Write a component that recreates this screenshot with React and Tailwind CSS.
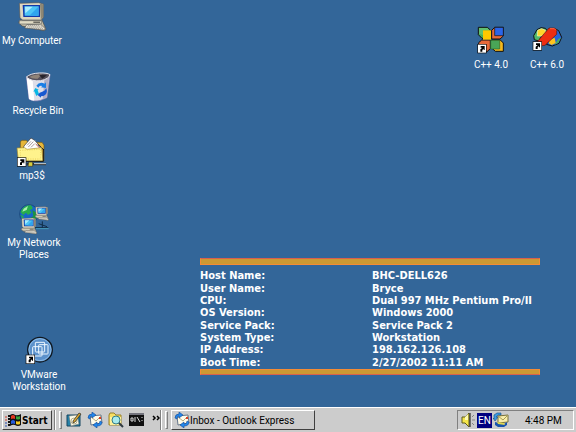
import React from "react";

const ShortcutArrow = ({ x, y }) => (
  <g transform={`translate(${x} ${y})`}>
    <rect width="28" height="28" fill="#111" />
    <rect x="2" y="2" width="24" height="24" fill="#fff" />
    <path d="M10 6H22V18H19V14L15 18V23H9V16L15 11H10Z" fill="#000" />
  </g>
);

const Monitor = ({ x, y, s }) => (
  <g transform={`translate(${x} ${y}) scale(${s})`}>
    <path d="M6 54L72 54L84 82L78 86L12 72L2 62Z" fill="#c4bda6" stroke="#4a4a4a" strokeWidth="2" />
    <path d="M4 56H70V66H4Z" fill="#e2dcc4" stroke="#666" strokeWidth="2" />
    <path d="M46 59H66V62H46Z" fill="#333" />
    <path d="M26 68L68 67L82 80L76 84L20 78Z" fill="#eee8d8" stroke="#555" strokeWidth="2" />
    <path d="M30 71H67M27 75H72M36 79H75" stroke="#777" strokeWidth="2" strokeDasharray="4 2" />
    <path d="M4 4L62 2L76 6V46L70 54H14L6 48Z" fill="#ddd6c0" stroke="#555" strokeWidth="2" />
    <path d="M66 5L76 7V46L68 53Z" fill="#8d8774" />
    <path d="M14 9H66V45H16Z" fill="#1238a8" />
    <path d="M19 13H62V41H20Z" fill="#4cc4f6" />
    <path d="M21 14H44L22 34Z" fill="#a9ecff" />
    <path d="M61 14V41H34Z" fill="#2fa4ee" />
  </g>
);

const ComputerIcon = () => (
  <svg width="30" height="30" viewBox="54 3 90 90" aria-hidden="true">
    <Monitor x={57} y={3} s={1} />
  </svg>
);

const RecycleIcon = () => (
  <svg width="26" height="30" viewBox="79 36 78 90" aria-hidden="true">
    <path d="M83 51L91 117Q104 126 126 121L145 113L154 45Z" fill="#dedee8" stroke="#8079b0" strokeWidth="2" />
    <path d="M84 54L91 117Q98 122 107 122L102 61Z" fill="#fff" />
    <path d="M137 60L152 47L144 112L132 118Z" fill="#b0aec5" />
    <path d="M83 51Q96 40 122 39Q146 38 154 44Q151 57 126 62Q98 65 83 51Z" fill="#55505c" stroke="#e4e4ec" strokeWidth="3" />
    <path d="M92 51Q107 42 130 43L117 56Q101 58 92 51Z" fill="#8f8378" />
    <path d="M121 44L145 46L131 56Z" fill="#27232b" />
    <path d="M113 77Q122 64 138 71L142 67V84L127 82L131 78Q122 75 119 83Z" fill="#197de6" />
    <path d="M110 84L120 89L117 91L121 102L113 108L107 94L104 95Z" fill="#08b7e5" />
    <path d="M124 98L137 92L143 85Q149 102 134 108L127 109V113L117 105L126 95Z" fill="#1758d0" />
  </svg>
);

const FolderIcon = () => (
  <svg width="32" height="32" viewBox="54 33 96 96" aria-hidden="true">
    <path d="M67 67V47L72 43H85L90 49H132L138 57V105H62V67Z" fill="#e6b63a" stroke="#6a551b" strokeWidth="2" />
    <path d="M78 60L99 36L110 43L132 67L126 78H72Z" fill="#fff" stroke="#333" strokeWidth="2" />
    <path d="M87 58L99 46M91 63L106 47M99 64L110 53" stroke="#a99" strokeWidth="3" />
    <path d="M113 54L127 68" stroke="#c05848" strokeWidth="3" />
    <path d="M119 55L138 72" stroke="#111" strokeWidth="3" />
    <path d="M57 66L80 65L87 70L131 65L135 105H61Z" fill="#fff38c" stroke="#a58a32" strokeWidth="2" />
    <path d="M66 73L128 70V99H68Z" fill="none" stroke="#e9d15e" strokeWidth="3" strokeDasharray="3 4" />
    <path d="M136 69V106H68" fill="none" stroke="#111" strokeWidth="3" />
    <path d="M86 114H144" stroke="#303030" strokeWidth="7" />
    <path d="M108 113H144" stroke="#ced8dd" strokeWidth="3" />
    <path d="M92 108H104V121H90Z" fill="#d7cd3c" stroke="#333" strokeWidth="2" />
    <ShortcutArrow x={57} y={94} />
  </svg>
);

const NetworkIcon = () => (
  <svg width="31" height="31" viewBox="56 24 93 93" aria-hidden="true">
    <circle cx="86" cy="54" r="28" fill="#1667c8" stroke="#173d68" strokeWidth="2" />
    <path d="M65 39Q76 25 92 28L98 37L89 43L94 50L83 57L77 50L69 57L60 49Z" fill="#27ad4b" />
    <path d="M96 42L111 52L109 67L98 76L90 67L99 60Z" fill="#1c9442" />
    <path d="M60 56L70 60L68 72Z" fill="#27ad4b" />
    <path d="M70 38L83 30L79 42L66 47Z" fill="#a9efaf" />
    <path d="M104 95H144M126 76V96M115 83L140 92" stroke="#102e48" strokeWidth="3" />
    <path d="M107 98H145" stroke="#55bed7" strokeWidth="2" />
    <Monitor x={104} y={31} s={0.49} />
    <Monitor x={62} y={65} s={0.57} />
  </svg>
);

const VmwareIcon = () => (
  <svg width="28" height="30" viewBox="74 18 84 90" aria-hidden="true">
    <circle cx="119" cy="59" r="37" fill="#5b91cb" stroke="#101820" strokeWidth="4" />
    <circle cx="119" cy="59" r="33" fill="none" stroke="#8bbce9" strokeWidth="3" />
    <g fill="none" stroke="#eef8ff" strokeWidth="3">
      <rect x="105" y="37" width="28" height="29" rx="2" />
      <rect x="97" y="50" width="28" height="28" rx="2" />
      <rect x="115" y="44" width="28" height="28" rx="2" />
    </g>
    <ShortcutArrow x={76} y={74} />
  </svg>
);

const Cpp4Icon = () => (
  <svg width="28" height="28" viewBox="51 34 84 84" aria-hidden="true">
    <g stroke="#111" strokeWidth="3">
      <path d="M55 38H82L91 46V71H66L55 60Z" fill="#4bae55" />
      <path d="M104 38H130V64L120 73H95V47Z" fill="#e66939" />
      <path d="M65 76H91V102L81 111H56V84Z" fill="#e66939" />
      <path d="M95 76H121L130 85V110H106L95 100Z" fill="#f5b91e" />
    </g>
    <path d="M57 40H82L88 46H69V61L57 58Z" fill="#62bf70" />
    <path d="M69 47H93V75H69Z" fill="#ffc800" />
    <path d="M104 38H130V63H104Z" fill="#2b65e8" stroke="#111" strokeWidth="2" />
    <path d="M92 77H119V103H92Z" fill="#49a557" stroke="#28662b" strokeWidth="2" />
    <ShortcutArrow x={52} y={88} />
  </svg>
);

const Cpp6Icon = () => (
  <svg width="31" height="26" viewBox="217 37 93 78" aria-hidden="true">
    <path d="M222 66L232 48L244 42L257 44L263 51L247 65L237 82L224 78Z" fill="#52b96b" stroke="#111" strokeWidth="3" />
    <path d="M234 50L246 45L257 50V60L247 67H233Z" fill="#ffd52b" stroke="#f6f0c0" strokeWidth="2" />
    <path d="M288 46L297 51L306 71L298 89L278 97L260 92Z" fill="#2764d7" stroke="#111" strokeWidth="3" />
    <path d="M296 76L304 72L296 87L284 94Z" fill="#49b357" />
    <path d="M270 78L285 72L288 88L276 94L267 89Z" fill="#ffc51e" />
    <path d="M268 43H285L291 49V62L256 95L241 97L233 84Z" fill="#ed2d12" stroke="#5d1710" strokeWidth="2" />
    <path d="M271 45H284L289 50" fill="none" stroke="#ff6542" strokeWidth="3" />
    <ShortcutArrow x={219} y={83} />
  </svg>
);

const MailIcon = () => (
  <svg width="16" height="16" viewBox="0 0 16 16" aria-hidden="true">
    <path d="M3 4L14 3L15 11L4 13Z" fill="#fffbe9" stroke="#65758b" />
    <path d="M4 5L9 9L14 4" fill="none" stroke="#b3a983" />
    <path d="M12 5H14V7H12Z" fill="#de3c22" />
    <path d="M1 6Q1 2 5 2V0L9 3L5 6V4Q3 4 3 7Z" fill="#2287ec" stroke="#164995" strokeWidth=".6" />
    <path d="M15 10Q15 14 10 14V16L6 13L10 10V12Q13 12 13 9Z" fill="#2287ec" stroke="#164995" strokeWidth=".6" />
  </svg>
);

const DesktopIcon = () => (
  <svg width="16" height="16" viewBox="0 0 16 16" aria-hidden="true">
    <path d="M1 3H14V14H1Z" fill="#2683aa" stroke="#174761" />
    <path d="M3 4L11 3L13 12L5 14Z" fill="#fffce8" stroke="#777" strokeWidth=".6" />
    <circle cx="8" cy="9" r="3" fill="none" stroke="#b6b18e" />
    <path d="M7 9L13 1L15 2L9 10L7 11Z" fill="#d9a733" stroke="#222" strokeWidth=".7" />
  </svg>
);

const SearchFolderIcon = () => (
  <svg width="16" height="16" viewBox="0 0 16 16" aria-hidden="true">
    <path d="M1 3L2 1H6L8 3H13V13H1Z" fill="#f7de63" stroke="#99812a" />
    <path d="M2 5H13V13H2Z" fill="#fff19a" />
    <circle cx="8" cy="8" r="4" fill="#a7ebed" stroke="#347c87" />
    <path d="M11 11L15 15" stroke="#303b43" strokeWidth="2" />
  </svg>
);

const ConsoleIcon = () => (
  <svg width="15" height="14" viewBox="0 0 15 14" aria-hidden="true">
    <path d="M0 1H15V13H0Z" fill="#111" />
    <path d="M0 1H15" stroke="#74747d" strokeWidth="2" />
    <path d="M2 5H4V8H2ZM6 4V9M8 4L11 9M13 4V5M13 7V8" fill="none" stroke="#ddd" />
  </svg>
);

const WindowsIcon = () => (
  <svg width="16" height="14" viewBox="0 0 16 14" aria-hidden="true">
    <path d="M5 2Q8 0 10 2Q13 3 16 1V12Q13 14 10 12Q8 11 5 13Z" fill="#111" />
    <path d="M6 3Q8 1 10 3V6Q8 5 6 6Z" fill="#e33820" />
    <path d="M11 3Q13 4 15 3V6Q13 7 11 6Z" fill="#35a63b" />
    <path d="M6 8Q8 6 10 8V11Q8 10 6 11Z" fill="#265bdb" />
    <path d="M11 8Q13 9 15 8V11Q13 12 11 11Z" fill="#f5ca20" />
    <path d="M3 3H5M3 6H5M3 9H5M3 12H5" stroke="#111" strokeWidth="2" />
    <path d="M0 4H2M0 7H2" stroke="#d23b2b" />
    <path d="M0 10H2M0 13H2" stroke="#294eb2" />
  </svg>
);

const SpeakerIcon = () => (
  <svg width="15" height="16" viewBox="0 0 15 16" aria-hidden="true">
    <path d="M1 5H4L8 1V15L4 11H1Z" fill="#f5e64b" stroke="#5e5b1d" />
    <path d="M4 5L7 2V8H4Z" fill="#fffbb7" />
    <path d="M9 1V15" stroke="#111" />
    <path d="M11 5L13 3M11 8H14M11 11L13 13" stroke="#858585" />
  </svg>
);

const TrayMailIcon = () => (
  <svg width="16" height="16" viewBox="0 0 16 16" aria-hidden="true">
    <path d="M5 4L15 3V10L5 11Z" fill="#f9edaa" stroke="#76703b" />
    <path d="M5 4L10 8L15 3" fill="none" stroke="#a79c56" />
    <path d="M1 7V3L4 1H8V3H5L3 5H5L2 9L0 6Z" fill="#399ce3" stroke="#174a85" strokeWidth=".6" />
    <path d="M2 10L6 11L11 12L14 10V13L11 15H5L2 13Z" fill="#1853ad" />
    <path d="M4 10L11 11L12 13L5 12Z" fill="#e1d94f" />
  </svg>
);

const MoreIcon = () => (
  <svg width="8" height="7" viewBox="0 0 8 7" aria-hidden="true">
    <path d="M1 1L3 3L1 5M5 1L7 3L5 5" fill="none" stroke="#000" strokeWidth="1.5" />
  </svg>
);

const shortcuts = [
  { label: "My Computer", Icon: ComputerIcon, place: "left-0 top-[2px] w-16" },
  { label: "Recycle Bin", Icon: RecycleIcon, place: "left-[6px] top-[72px] w-16" },
  { label: "mp3$", Icon: FolderIcon, place: "left-0 top-[137px] w-16" },
  { label: "My Network Places", Icon: NetworkIcon, place: "left-[2px] top-[204px] w-16" },
  { label: "VMware Workstation", Icon: VmwareIcon, place: "left-[7px] top-[336px] w-16" },
  { label: "C++ 4.0", Icon: Cpp4Icon, place: "right-[53px] top-[26px] w-16" },
  { label: "C++ 6.0", Icon: Cpp6Icon, place: "right-[-3px] top-[26px] w-16" },
];

const systemInfo = [
  ["Host Name:", "BHC-DELL626"],
  ["User Name:", "Bryce"],
  ["CPU:", "Dual 997 MHz Pentium Pro/II"],
  ["OS Version:", "Windows 2000"],
  ["Service Pack:", "Service Pack 2"],
  ["System Type:", "Workstation"],
  ["IP Address:", "198.162.126.108"],
  ["Boot Time:", "2/27/2002 11:11 AM"],
];

const Grip = () => (
  <div className="flex h-5 shrink-0 gap-[3px]" aria-hidden="true">
    <span className="w-[2px] border-l border-[#808080] bg-white" />
    <span className="my-px w-[3px] border border-t-white border-r-[#808080] border-b-[#808080] border-l-white" />
  </div>
);

export default function App() {
  return (
    <div className="flex min-h-screen flex-col overflow-hidden bg-[#336699] font-['Roboto',Tahoma,sans-serif] text-[10px]">
      <main className="relative flex flex-1 flex-col items-end justify-end pr-9 pb-8">
        {shortcuts.map(({ label, Icon, place }) => (
          <button
            key={label}
            className={`absolute flex flex-col items-center text-center leading-[12px] text-white ${place}`}
          >
            <span className="flex h-[33px] items-start justify-center">
              <Icon />
            </span>
            <span>{label}</span>
          </button>
        ))}

        <section
          aria-label="System information"
          className="w-[340px] font-['DejaVu_Sans_Condensed','DejaVu_Sans',Verdana,sans-serif] text-[11px] leading-[12px] font-bold text-white"
        >
          <div className="h-[7px] border border-[#f58c35] border-t-[#d9604c] bg-[#cc9933]" />
          <table className="mt-[5px] h-[99px] w-full border-collapse">
            <tbody>
              {systemInfo.map(([name, value]) => (
                <tr key={name}>
                  <th scope="row" className="w-[172px] p-0 text-left font-bold">
                    {name}
                  </th>
                  <td className="p-0 whitespace-nowrap">{value}</td>
                </tr>
              ))}
            </tbody>
          </table>
          <div className="h-[6px] border border-[#f58c35] border-b-[#d9604c] bg-[#cc9933]" />
        </section>
      </main>

      <footer className="flex h-[25px] shrink-0 items-center border-t border-white bg-[#cccccc] px-[2px] text-black">
        <button className="flex h-5 w-[50px] items-center gap-px border border-t-white border-r-[#404040] border-b-[#404040] border-l-white pl-[2px] font-['DejaVu_Sans_Condensed','DejaVu_Sans',sans-serif] font-bold">
          <WindowsIcon />
          Start
        </button>
        <div className="ml-[2px] flex">
          <Grip />
        </div>
        <nav aria-label="Quick launch" className="ml-1 flex items-center gap-[5px]">
          <button aria-label="Show desktop"><DesktopIcon /></button>
          <button aria-label="Mail"><MailIcon /></button>
          <button aria-label="Search"><SearchFolderIcon /></button>
          <button aria-label="Console"><ConsoleIcon /></button>
          <button aria-label="More" className="ml-[3px] h-5 pb-1"><MoreIcon /></button>
        </nav>
        <div className="flex">
          <Grip />
        </div>
        <button className="ml-[3px] flex h-5 w-36 items-center border border-t-white border-r-[#404040] border-b-[#404040] border-l-white pl-[2px]">
          <MailIcon />
          Inbox - Outlook Express
        </button>
        <div className="ml-auto flex h-5 w-[117px] items-center border border-t-[#808080] border-r-white border-b-white border-l-[#808080] pl-[3px]">
          <SpeakerIcon />
          <span className="ml-px flex h-[15px] w-[15px] items-center justify-center bg-[#000080] text-white">EN</span>
          <span className="ml-px"><TrayMailIcon /></span>
          <time className="ml-4 whitespace-nowrap">4:48 PM</time>
        </div>
      </footer>
    </div>
  );
}
